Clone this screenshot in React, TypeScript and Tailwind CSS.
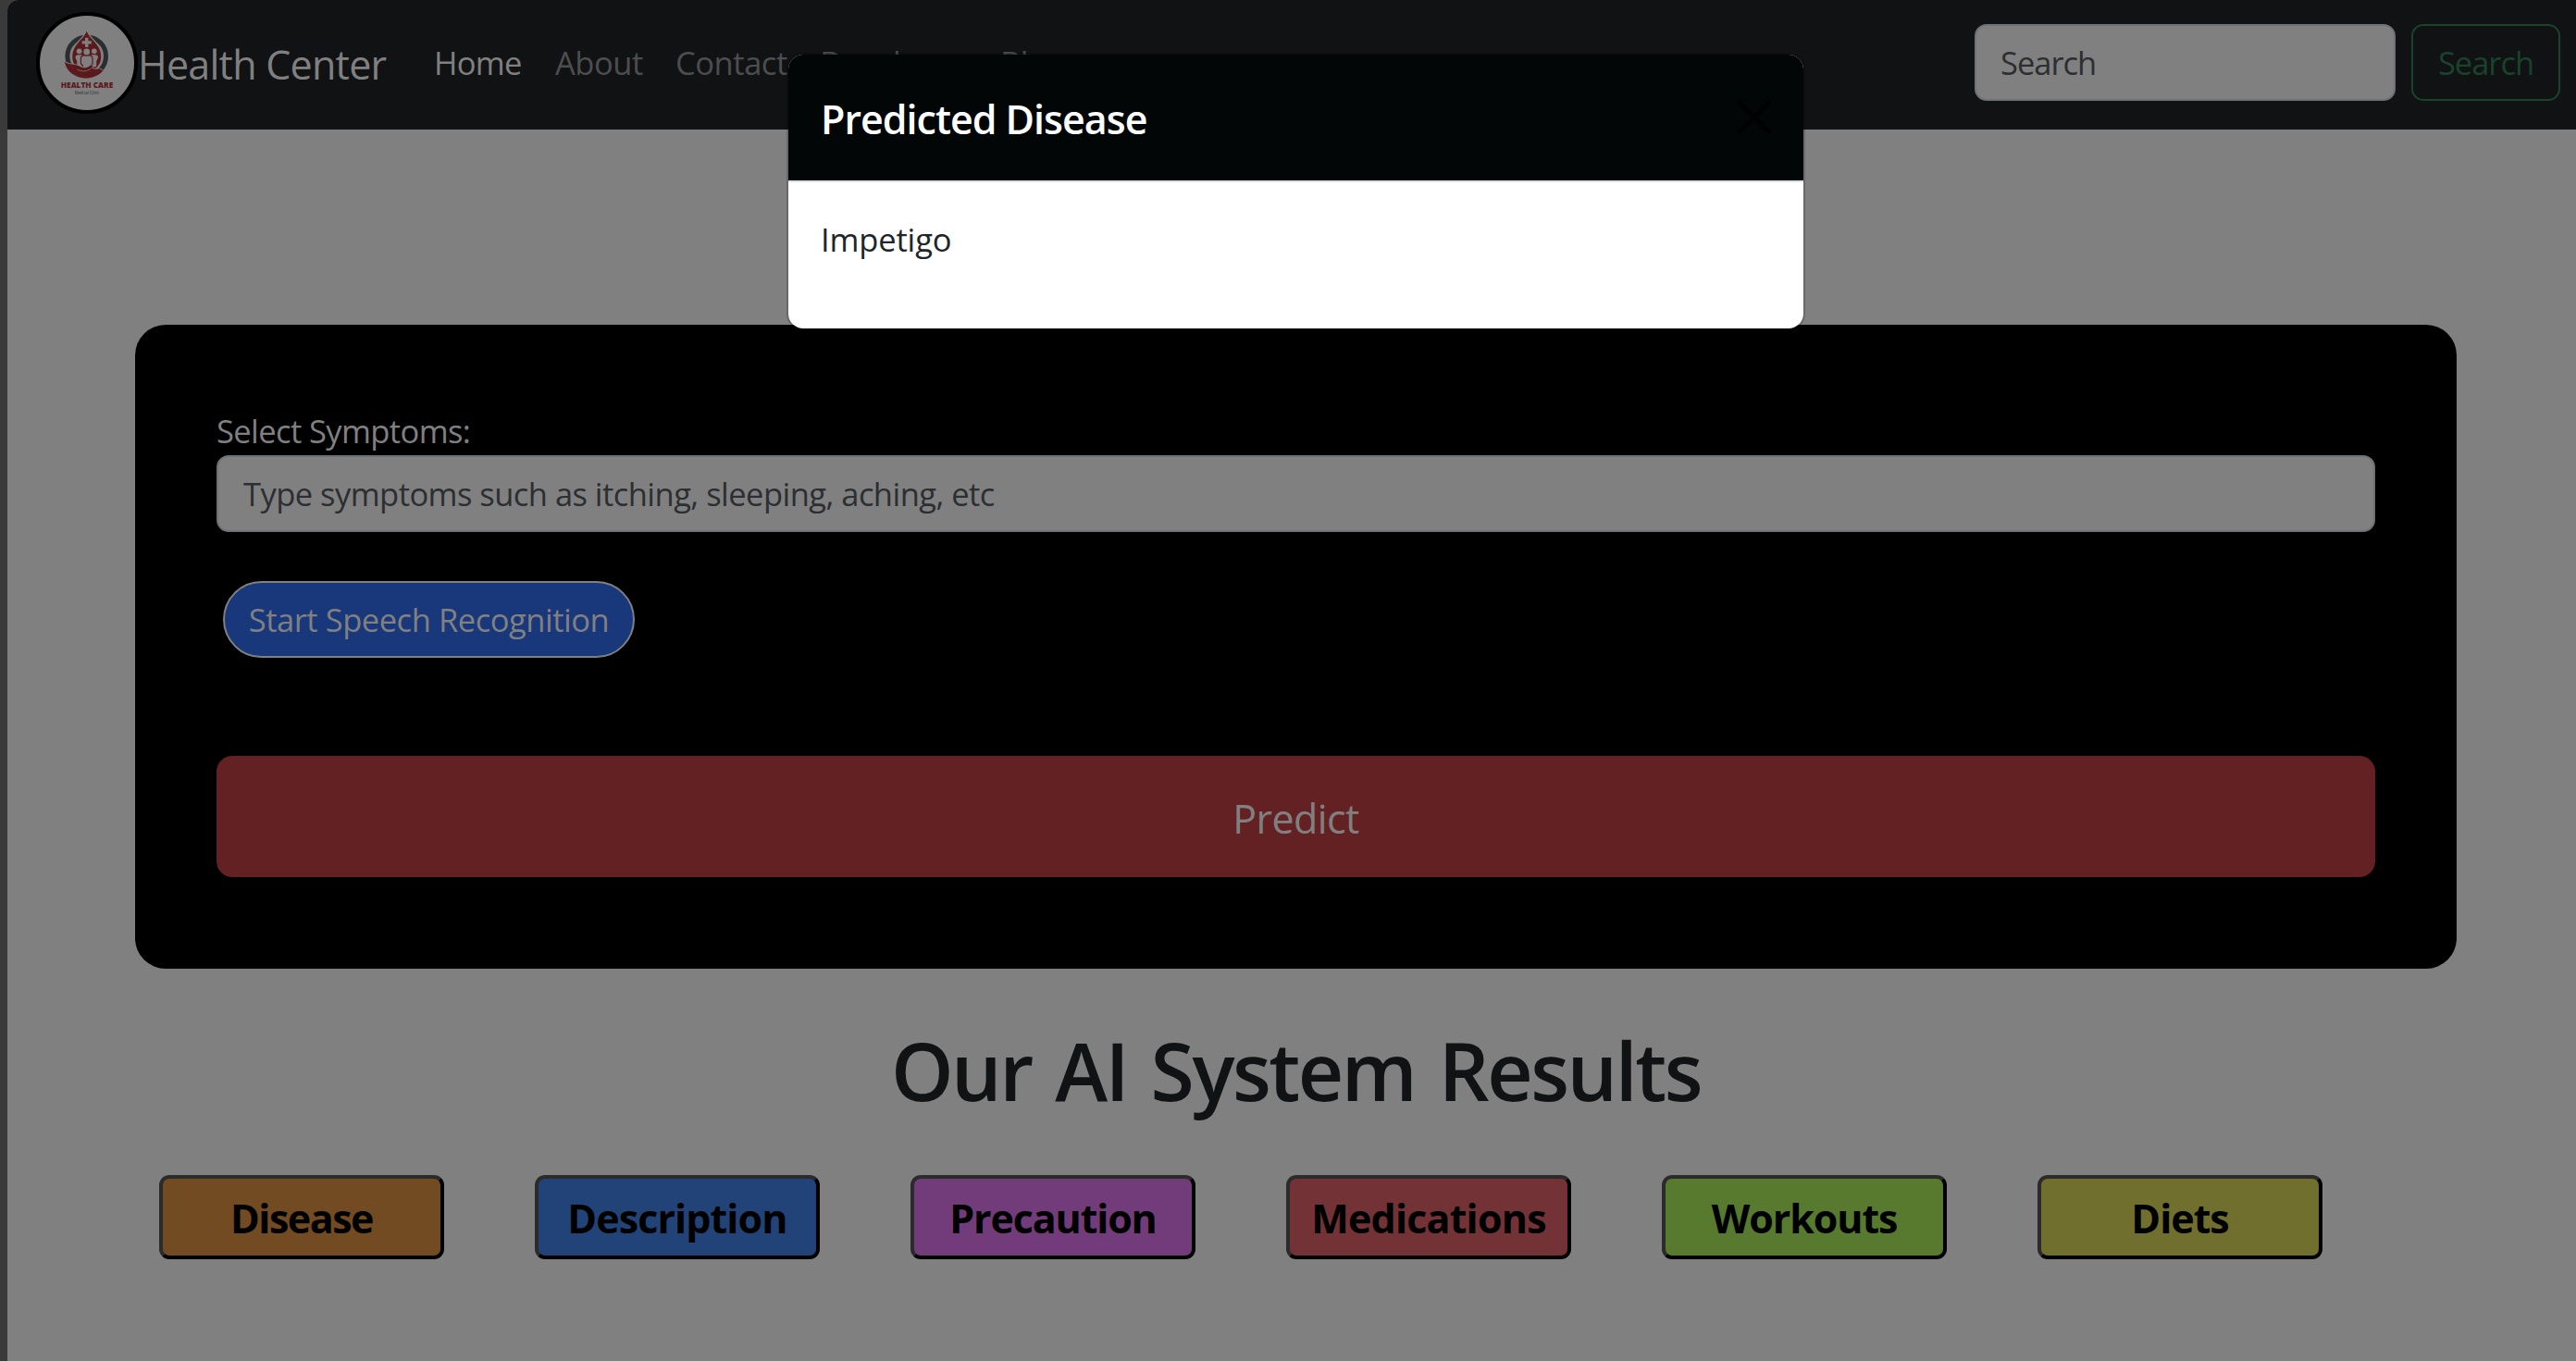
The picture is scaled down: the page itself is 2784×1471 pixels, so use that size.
const navLinks = [
  { label: 'Home', className: 'w-[131px] text-[#808080] tracking-[-0.7px]' },
  { label: 'About', className: 'w-[130px] text-[#4c4d4e] tracking-[-0.45px]' },
  { label: 'Contact', className: 'w-[156px] text-[#4c4d4e] tracking-[-0.45px]' },
  { label: 'Developer', className: 'w-[195px] text-[#4c4d4e] tracking-[-0.5px]' },
  { label: 'Blog', className: 'w-[110px] text-[#4c4d4e] tracking-[-0.5px]' },
];

const results = [
  { label: 'Disease', className: 'bg-[#724b23] tracking-[-1.5px]' },
  { label: 'Description', className: 'bg-[#224377] tracking-[-0.9px]' },
  { label: 'Precaution', className: 'bg-[#723b7a] tracking-[-1.15px]' },
  { label: 'Medications', className: 'bg-[#723236] tracking-[-0.8px]' },
  { label: 'Workouts', className: 'bg-[#577a2f] tracking-[-1.1px]' },
  { label: 'Diets', className: 'bg-[#716f2d] tracking-[-1px]' },
];

function Logo() {
  return (
    <svg viewBox="0 0 110 110" className="h-[110px] w-[110px] shrink-0">
      <circle cx="55" cy="55" r="53" fill="#808080" stroke="#000" strokeWidth="4" />
      <circle cx="54.7" cy="47.7" r="20.8" fill="none" stroke="#2b2e30" strokeWidth="5" />
      <path
        d="M54.7 20.5C56.5 26 61 29.5 64.8 34.2C68.4 38.5 70.2 43 70.2 48.5C70.2 57.5 63.5 64 54.7 64C45.9 64 39.2 57.5 39.2 48.5C39.2 43 41 38.5 44.6 34.2C48.4 29.5 52.9 26 54.7 20.5Z"
        fill="#5b191c"
        stroke="#808080"
        strokeWidth="2.4"
        paintOrder="stroke"
      />
      <path d="M53 27.8h3.4v3.4h3.4v3.4h-3.4V38H53v-3.4h-3.4v-3.4H53z" fill="#808080" />
      <g fill="#808080">
        <circle cx="46.6" cy="42.3" r="2.9" />
        <circle cx="62.8" cy="42.3" r="2.9" />
        <path d="M42.4 49.2q0-3 3-3h3.4q3 0 3 3v10h-7.6v-6z" />
        <path d="M67 49.2q0-3-3-3h-3.4q-3 0-3 3v10h7.6v-6z" />
      </g>
      <g fill="#808080" stroke="#5b191c" strokeWidth="1.2">
        <path d="M48.4 50.4q0-3.6 3.6-3.6h5.4q3.6 0 3.6 3.6v5.6l-2 1.6v6h-8.6v-6l-2-1.6z" />
        <circle cx="54.7" cy="43" r="4" />
      </g>
      <path
        d="M31 53.4C34.5 57 39 56 44 57.4C47.5 58.4 49.5 60.4 53 60.2C56.5 60 58 57.5 60.5 57.3C61.8 57.4 61.3 59 60 60.5C62.5 61.3 64.5 62.6 67.5 61.3C70 60.5 70.5 63 72.5 63.6C68.5 68 62 71.4 54.7 71.4C42.5 71.4 32 64 31 53.4Z"
        fill="#5b191c"
        stroke="#808080"
        strokeWidth="1.4"
        paintOrder="stroke"
      />
      <path d="M44.5 62.2C49.5 64.6 55 64.6 59.6 61" fill="none" stroke="#808080" strokeWidth="0.7" />
      <text x="26.8" y="82.2" textLength="56.4" lengthAdjust="spacingAndGlyphs" fontSize="8.7" fontWeight="800" fill="#5b191c">
        HEALTH CARE
      </text>
      <text x="41.7" y="88.8" textLength="26.6" lengthAdjust="spacingAndGlyphs" fontSize="4.6" fill="#2b2e30">
        Medical Clinic
      </text>
    </svg>
  );
}

function Navbar() {
  return (
    <nav className="flex h-[140px] shrink-0 items-center rounded-tl-[12px] bg-[#111214] pr-[17px] pl-[31px]">
      <div className="-mt-1 flex items-center">
        <Logo />
        <span className="mt-[4px] w-[320px] text-[43px] leading-[60px] tracking-[-0.75px] whitespace-nowrap text-[#808080]">
          Health Center
        </span>
      </div>
      <ul className="-mt-1 flex">
        {navLinks.map((link) => (
          <li key={link.label} className={`shrink-0 whitespace-nowrap ${link.className}`}>
            {link.label}
          </li>
        ))}
      </ul>
      <form className="-mt-[5px] ml-auto flex gap-[17px]">
        <div className="flex h-[83px] w-[455px] items-center rounded-[13px] border-2 border-[#6f7173] bg-[#808080] pl-[26px] tracking-[-1px] text-[#2c2f31]">
          Search
        </div>
        <button
          type="button"
          className="h-[83px] w-[161px] rounded-[13px] border-2 border-[#19432a] tracking-[-1px] text-[#19432a]"
        >
          Search
        </button>
      </form>
    </nav>
  );
}

function SymptomForm() {
  return (
    <section className="mt-[211px] mr-[129px] ml-[138px] flex h-[696px] shrink-0 flex-col rounded-[33px] bg-black px-[88px] pt-[88px]">
      <label className="h-[53px] leading-[53px] tracking-[-0.6px] text-[#808080]">Select Symptoms:</label>
      <div className="flex h-[83px] shrink-0 items-center rounded-[13px] border-2 border-[#6f7173] bg-[#808080] pl-[27px] tracking-[-0.54px] text-[#2c2f31]">
        Type symptoms such as itching, sleeping, aching, etc
      </div>
      <button
        type="button"
        className="mt-[53px] ml-[7px] h-[83px] w-[445px] shrink-0 rounded-full border-2 border-[#808080] bg-[#19377b] pt-px tracking-[-0.46px] text-[#808080]"
      >
        Start Speech Recognition
      </button>
      <button
        type="button"
        className="mt-[106px] h-[131px] shrink-0 rounded-[17px] bg-[#632124] pt-[5px] text-[43px] tracking-[-0.6px] text-[#808080]"
      >
        Predict
      </button>
    </section>
  );
}

function DiseaseModal() {
  return (
    <div
      role="dialog"
      className="absolute top-[57px] left-[850px] w-[1101px] rounded-[18px] border-2 border-black/[0.175] bg-white bg-clip-padding"
    >
      <header className="flex h-[138px] items-center justify-between rounded-t-[16px] border-b-2 border-[#dee2e6] bg-[#020607] pr-[34px] pl-[35px]">
        <h5 className="pt-[3px] text-[43px] leading-[60px] font-semibold tracking-[-1px] text-white">Predicted Disease</h5>
        <svg viewBox="0 0 38 38" className="h-[38px] w-[38px]">
          <path d="M3 3L35 35M35 3L3 35" stroke="#000" strokeWidth="4.5" strokeLinecap="round" />
        </svg>
      </header>
      <div className="h-[158px] pt-[35px] pl-[35px] leading-[53px] tracking-[-0.15px] text-[#212529]">Impetigo</div>
    </div>
  );
}

export default function App() {
  return (
    <div className="relative h-[1471px] w-[2784px] overflow-hidden bg-[#3a3a3a] pl-[8px] font-['Open_Sans',sans-serif] text-[34.5px] leading-[52px]">
      <div className="flex h-full flex-col rounded-tl-[12px] bg-[#808080]">
        <Navbar />
        <SymptomForm />
        <h1 className="mt-[50px] pl-[9px] text-center text-[86px] leading-[120px] font-semibold tracking-[-2.5px] text-[#111214] [word-spacing:5.5px]">
          Our AI System Results
        </h1>
        <div className="mt-[53px] ml-[164px] flex gap-[98px]">
          {results.map((result) => (
            <button
              key={result.label}
              type="button"
              className={`h-[91px] w-[308px] rounded-[11px] border-4 border-t-[#2b2b2b] border-r-black border-b-black border-l-[#2b2b2b] pt-[2px] text-[43px] font-bold text-black ${result.className}`}
            >
              {result.label}
            </button>
          ))}
        </div>
      </div>
      <DiseaseModal />
    </div>
  );
}
